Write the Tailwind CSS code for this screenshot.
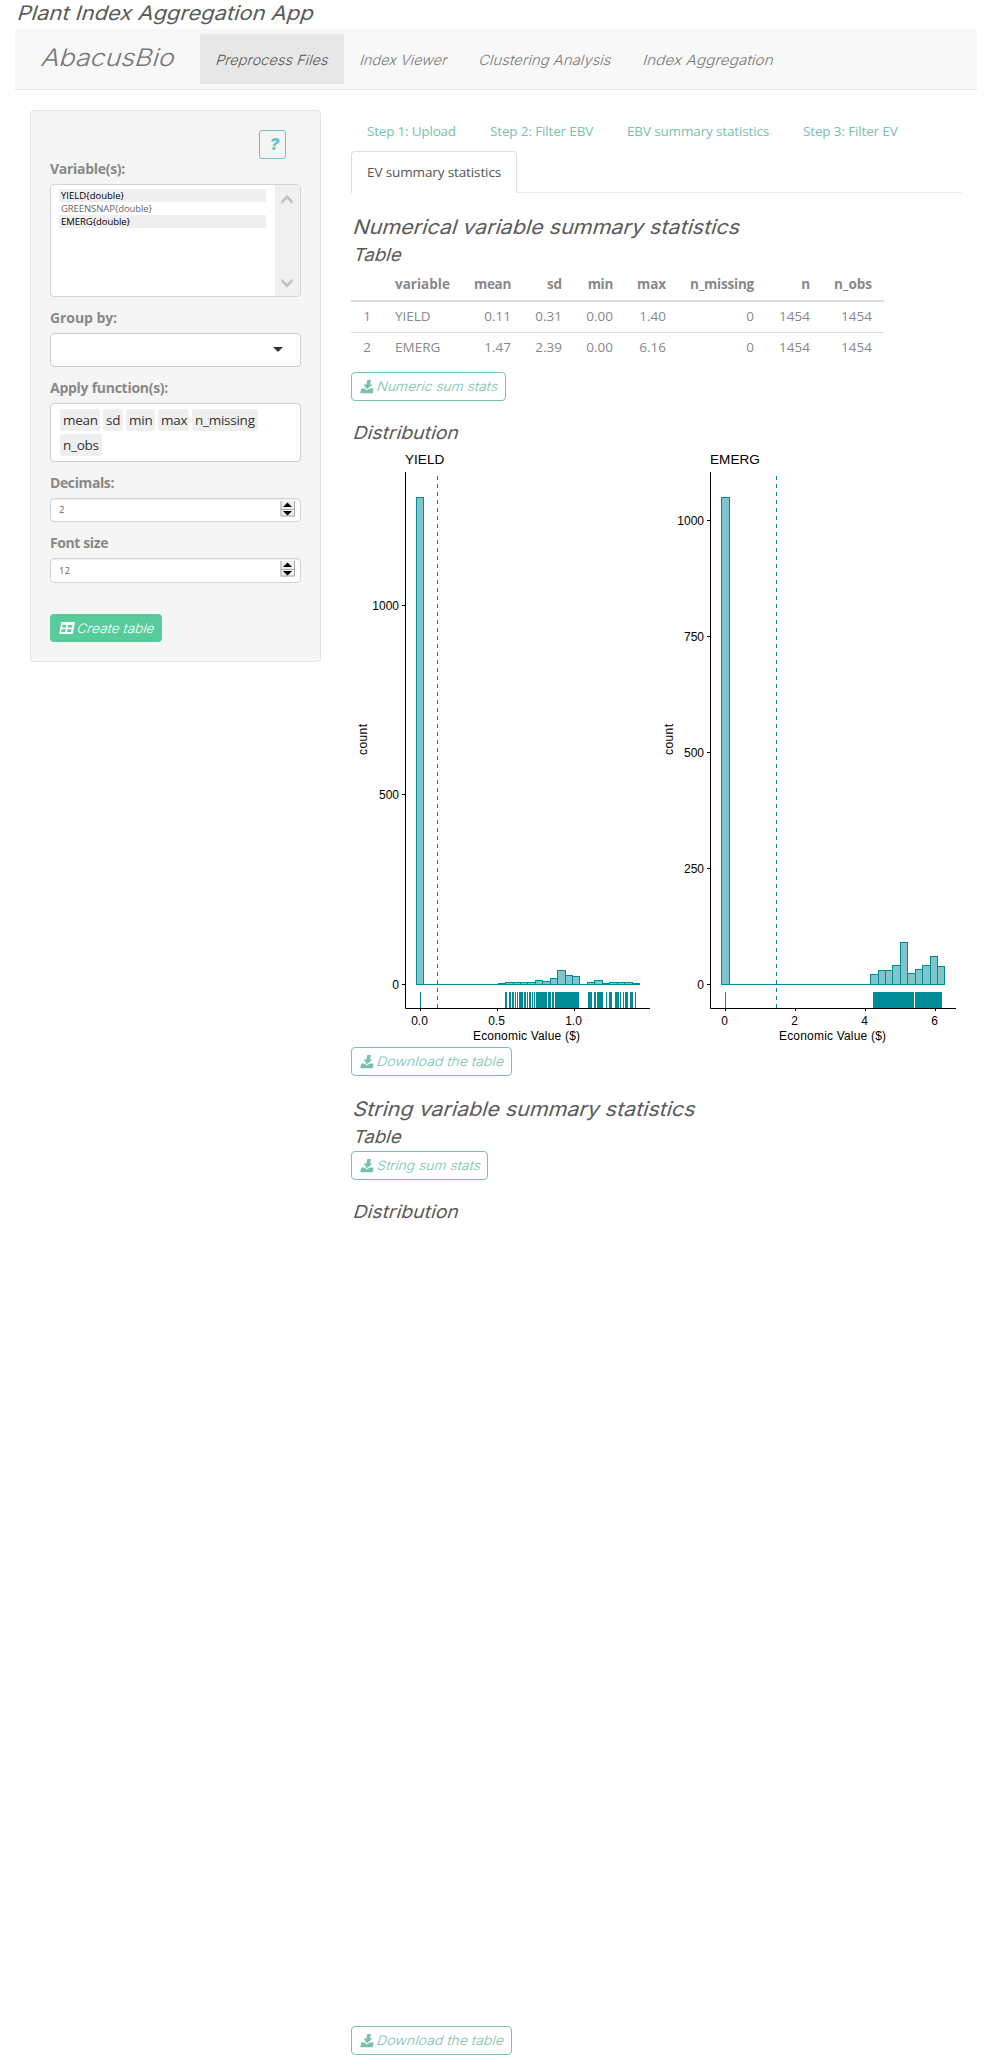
<!DOCTYPE html>
<html lang="en">
<head>
<meta charset="utf-8">
<title>Plant Index Aggregation App</title>
<script src="https://cdn.jsdelivr.net/npm/@tailwindcss/browser@4"></script>
</head>
<body class="bg-white font-['Open_Sans',sans-serif] text-sm text-[#888]">
<svg class="hidden">
  <symbol id="dl" viewBox="0 0 14 14"><path d="M7.400 0H11L10 4.500H12.800L6.800 9.200L3.600 4.500H6.300Z" fill="currentColor"/><path d="M1.400 8.600H4.600L6.800 10.600L9.600 8.600H13.600L12.800 13.200H0.200Z" fill="currentColor"/></symbol>
</svg>
<div class="h-[2055px] px-[15px]">
  <h2 class="h-[29px] pl-[1px] font-['Inter',sans-serif] text-[20px] leading-[27px] text-[#5a5a5a]"><span class="inline-block origin-[0_78%] [transform:skewX(-17deg)_scaleX(1.097)]">Plant Index Aggregation App</span></h2>
  <nav class="flex h-[61px] border-b border-[#e7e7e7] bg-[#f8f8f8] pt-[5px] font-['Inter',sans-serif] font-light text-[#777]">
    <div class="w-[185px] pl-[25px] text-[24px] leading-[47px]"><span class="inline-block origin-[0_68%] [transform:skewX(-17deg)_scaleX(1.115)]">AbacusBio</span></div>
    <div class="h-[50px] w-[144px] bg-[#e7e7e7] pl-[15px] leading-[51px] text-[#555]"><span class="inline-block origin-[0_60%] [transform:skewX(-17deg)_scaleX(1.045)]">Preprocess Files</span></div>
    <div class="w-[119px] pl-[15px] leading-[51px]"><span class="inline-block origin-[0_60%] [transform:skewX(-17deg)_scaleX(1.035)]">Index Viewer</span></div>
    <div class="w-[164px] pl-[15px] leading-[51px]"><span class="inline-block origin-[0_60%] [transform:skewX(-17deg)_scaleX(1.065)]">Clustering Analysis</span></div>
    <div class="pl-[15px] leading-[51px]"><span class="inline-block origin-[0_60%] [transform:skewX(-17deg)_scaleX(1.1)]">Index Aggregation</span></div>
  </nav>
  <div class="flex gap-[30px] pl-[15px] pt-5">
    <aside class="h-[552px] w-[291px] shrink-0 rounded border border-[#e3e3e3] bg-[#f5f5f5] px-[19px] pt-[19px]">
      <button class="ml-[209px] block h-[29px] w-[27px] rounded-[3px] border border-[#6cc3d5] pl-1 text-center font-['Inter',sans-serif] text-[16px] leading-[27px] font-black italic text-[#6cc3d5]">?</button>
      <div class="h-[25px] leading-5 font-bold tracking-[-0.29px]">Variable(s):</div>
      <div class="flex h-[113px] w-[251px] justify-between overflow-hidden rounded border border-[#ced4da] bg-white">
        <div class="w-[215px] pl-2 pt-1 text-[9.5px] leading-[13px] text-[#666]">
          <div class="h-[13px] bg-[#efefef] pl-[2px] text-black">YIELD{double}</div>
          <div class="h-[13px] pl-[2px] tracking-[-0.09px]">GREENSNAP{double}</div>
          <div class="h-[13px] bg-[#efefef] pl-[2px] tracking-[-0.07px] text-black">EMERG{double}</div>
        </div>
        <svg class="h-[111px] w-[25px] bg-[#f0f0f0]" viewBox="0 0 25 111" fill="#bfbfbf"><path d="M6.500 15.500L12 10L17.500 15.500V19L12 13.800L6.500 19Z"/><path d="M6.500 93.500L12 98.800L17.500 93.500V97L12 102.500L6.500 97Z"/></svg>
      </div>
      <div class="mt-[10px] h-[26px] leading-[22px] font-bold tracking-[-0.08px]">Group by:</div>
      <div class="flex h-[34px] w-[251px] items-center justify-end rounded border border-[#ccc] bg-white pr-[17px]"><svg class="mt-[-2px] h-[5px] w-[10px]" viewBox="0 0 10 5"><path d="M0 0H10L5 5Z" fill="#333"/></svg></div>
      <div class="mt-[10px] h-[26px] leading-[22px] font-bold tracking-[-0.27px]">Apply function(s):</div>
      <div class="flex h-[59px] w-[251px] flex-wrap content-start gap-[3px] rounded border border-[#ccc] bg-white pl-[9px] pt-[5px] text-[13.5px] leading-[22px] tracking-[-0.25px] text-[#333]">
        <div class="h-[22px] w-[40px] rounded-[3px] bg-[#efefef] pl-[3px]">mean</div>
        <div class="h-[22px] w-[20px] rounded-[3px] bg-[#efefef] pl-[3px]">sd</div>
        <div class="h-[22px] w-[29px] rounded-[3px] bg-[#efefef] pl-[3px]">min</div>
        <div class="h-[22px] w-[31px] rounded-[3px] bg-[#efefef] pl-[3px]">max</div>
        <div class="h-[22px] w-[66px] rounded-[3px] bg-[#efefef] pl-[3px]">n_missing</div>
        <div class="h-[22px] w-[42px] rounded-[3px] bg-[#efefef] pl-[3px]">n_obs</div>
      </div>
      <div class="mt-[10px] h-[26px] leading-[22px] font-bold tracking-[-0.39px]">Decimals:</div>
      <div class="flex h-6 w-[251px] justify-between rounded border border-[#ced4da] bg-white pl-2 pr-[5px] text-[9.5px] leading-[22px] text-[#666] shadow-[inset_0_1px_1px_rgba(0,0,0,.075)]"><span>2</span>
        <svg class="mt-[2px] h-4 w-[15px]" viewBox="0 0 15 16"><path d="M0 0H15V16H0Z" fill="#efefef"/><path d="M1 0V15H14.500V0M1 8.500H14" fill="none" stroke="#aaa"/><path d="M3 6L7.500 1.500L12 6ZM3 10L7.500 14.500L12 10Z" fill="#000"/></svg></div>
      <div class="mt-[10px] h-[26px] leading-[21px] font-bold tracking-[-0.4px]">Font size</div>
      <div class="flex h-[25px] w-[251px] justify-between rounded border border-[#ced4da] bg-white pl-2 pr-[5px] text-[9.5px] leading-[23px] text-[#666] shadow-[inset_0_1px_1px_rgba(0,0,0,.075)]"><span>12</span>
        <svg class="mt-[2px] h-4 w-[15px]" viewBox="0 0 15 16"><path d="M0 0H15V16H0Z" fill="#efefef"/><path d="M1 0V15H14.500V0M1 8.500H14" fill="none" stroke="#aaa"/><path d="M3 6L7.500 1.500L12 6ZM3 10L7.500 14.500L12 10Z" fill="#000"/></svg></div>
      <button class="mt-[31px] flex h-7 w-[112px] items-center rounded bg-[#56cc9d] pl-[9px] font-['Inter',sans-serif] text-[13px] leading-[27px] font-light text-white"><svg class="mr-px h-3 w-[16px]" viewBox="0 0 16 12"><path fill-rule="evenodd" d="M3.300 0H15Q16 0 15.800 1L14 11Q13.800 12 12.800 12H1Q0 12 .2 11L2.200 1Q2.400 0 3.300 0ZM3.500 3L3 5.600H7L7.500 3ZM9.300 3L8.800 5.600H12.900L13.400 3ZM2.700 7.300L2.200 10H6.200L6.700 7.300ZM8.500 7.300L8 10H12.100L12.600 7.300Z" fill="#fff"/></svg><span class="inline-block origin-[0_68%] [transform:skewX(-17deg)_scaleX(1.055)]">Create table</span></button>
    </aside>
    <main class="flex w-[611px] flex-col">
      <div class="flex h-[41px] pl-4 text-[13.5px] leading-[41px] tracking-[-0.15px] text-[#78c2ad]">
        <div class="w-[123px] pt-px tracking-[-0.2px]">Step 1: Upload</div>
        <div class="w-[137px] pt-px">Step 2: Filter EBV</div>
        <div class="w-[176px] pt-px">EBV summary statistics</div>
        <div class="pt-px">Step 3: Filter EV</div>
      </div>
      <div class="flex h-[42px]">
        <div class="w-[166px] rounded-t border border-b-0 border-[#ddd] pl-[15px] text-[13.5px] leading-[40px] tracking-[-0.12px] text-[#555]">EV summary statistics</div>
        <div class="grow border-b border-[#ececec]"></div>
      </div>
      <h3 class="mt-[22px] h-[29px] pl-px font-['Inter',sans-serif] text-[20px] leading-6 text-[#5a5a5a]"><span class="inline-block origin-[0_80%] [transform:skewX(-17deg)_scaleX(1.074)]">Numerical variable summary statistics</span></h3>
      <h4 class="h-[22px] pl-px font-['Inter',sans-serif] text-[18px] leading-[22px] text-[#5a5a5a]"><span class="inline-block origin-[0_80%] [transform:skewX(-17deg)_scaleX(1.04)]">Table</span></h4>
      <table class="mt-[3px] w-[533px] table-fixed border-collapse text-right text-[13.5px] leading-[29px]">
        <colgroup><col class="w-[32px]"><col class="w-[79px]"><col class="w-[61px]"><col class="w-[51px]"><col class="w-[51px]"><col class="w-[53px]"><col class="w-[88px]"><col class="w-[56px]"><col class="w-[62px]"></colgroup>
        <tbody>
        <tr class="h-8 border-b-2 border-[#ddd] font-bold"><td></td><td class="p-0 pl-3 text-left">variable</td><td class="p-0 pr-3 tracking-[-0.3px]">mean</td><td class="p-0 pr-3 tracking-[-0.1px]">sd</td><td class="p-0 pr-3 tracking-[-0.3px]">min</td><td class="p-0 pr-3 tracking-[-0.1px]">max</td><td class="p-0 pr-3 tracking-[-0.2px]">n_missing</td><td class="p-0 pr-3">n</td><td class="p-0 pr-3">n_obs</td></tr>
        <tr class="h-[31px] border-b border-[#ddd]"><td class="p-0 pr-3">1</td><td class="p-0 pl-3 text-left">YIELD</td><td class="p-0 pr-3">0.11</td><td class="p-0 pr-3">0.31</td><td class="p-0 pr-3">0.00</td><td class="p-0 pr-3">1.40</td><td class="p-0 pr-3">0</td><td class="p-0 pr-3">1454</td><td class="p-0 pr-3">1454</td></tr>
        <tr class="h-[30px]"><td class="p-0 pr-3">2</td><td class="p-0 pl-3 text-left">EMERG</td><td class="p-0 pr-3">1.47</td><td class="p-0 pr-3">2.39</td><td class="p-0 pr-3">0.00</td><td class="p-0 pr-3">6.16</td><td class="p-0 pr-3">0</td><td class="p-0 pr-3">1454</td><td class="p-0 pr-3">1454</td></tr>
        </tbody>
      </table>
      <button class="mt-[10px] flex h-[29px] w-[155px] items-center rounded border border-[#78c2ad] pl-2 font-['Inter',sans-serif] text-[13px] leading-[27px] font-light text-[#78c2ad]"><svg class="mr-[2px] size-[14px]"><use href="#dl"/></svg><span class="inline-block origin-[0_68%] [transform:skewX(-17deg)_scaleX(1.07)]">Numeric sum stats</span></button>
      <h4 class="mt-5 h-6 pl-px font-['Inter',sans-serif] text-[18px] leading-6 text-[#5a5a5a]"><span class="inline-block origin-[0_78%] [transform:skewX(-17deg)_scaleX(1.08)]">Distribution</span></h4>
      <svg id="plots" class="h-[602px] w-[611px] shrink-0 font-['Liberation_Sans',sans-serif]" viewBox="351 445 611 602" fill="#000" font-size="12"></svg>
      <button class="flex h-[29px] w-[161px] items-center rounded border border-[#78c2ad] pl-2 font-['Inter',sans-serif] text-[13px] leading-[27px] font-light text-[#78c2ad]"><svg class="mr-[2px] size-[14px]"><use href="#dl"/></svg><span class="inline-block origin-[0_68%] [transform:skewX(-17deg)_scaleX(1.085)]">Download the table</span></button>
      <h3 class="mt-[21px] h-[29px] pl-px font-['Inter',sans-serif] text-[20px] leading-6 text-[#5a5a5a]"><span class="inline-block origin-[0_80%] [transform:skewX(-17deg)_scaleX(1.07)]">String variable summary statistics</span></h3>
      <h4 class="h-[22px] pl-px font-['Inter',sans-serif] text-[18px] leading-[22px] text-[#5a5a5a]"><span class="inline-block origin-[0_80%] [transform:skewX(-17deg)_scaleX(1.04)]">Table</span></h4>
      <button class="mt-[3px] flex h-[29px] w-[137px] items-center rounded border border-[#78c2ad] pl-2 font-['Inter',sans-serif] text-[13px] leading-[27px] font-light text-[#78c2ad]"><svg class="mr-[2px] size-[14px]"><use href="#dl"/></svg><span class="inline-block origin-[0_68%] [transform:skewX(-17deg)_scaleX(1.07)]">String sum stats</span></button>
      <h4 class="mt-5 h-[826px] pl-px font-['Inter',sans-serif] text-[18px] leading-6 text-[#5a5a5a]"><span class="inline-block origin-[0_78%] [transform:skewX(-17deg)_scaleX(1.08)]">Distribution</span></h4>
      <button class="flex h-[29px] w-[161px] items-center rounded border border-[#78c2ad] pl-2 font-['Inter',sans-serif] text-[13px] leading-[27px] font-light text-[#78c2ad]"><svg class="mr-[2px] size-[14px]"><use href="#dl"/></svg><span class="inline-block origin-[0_68%] [transform:skewX(-17deg)_scaleX(1.085)]">Download the table</span></button>
    </main>
  </div>
</div>
<script>
// Histograms with rug marks; positions are in page pixels
const BASE = 984.5, AXIS = 1008.5, INK = '#008b98', FILL = '#80c5cc';
const charts = [
  { title: 'YIELD', x0: 405.5, x1: 650, mean: 437.5, first: [416.5, 423.5], cx: 526.5, cy: 367,
    y: [[605.5, '1000'], [794.5, '500'], [984.5, '0']], x: [[420.5, '0.0'], [497.5, '0.5'], [574.5, '1.0']],
    edges: [498.5, 505.5, 513.5, 520.5, 527.5, 535.5, 542.5, 550.5, 557.5, 565.5, 572.5, 579.5, 587.5, 594.5, 602.5, 609.5, 617.5, 624.5, 632.5, 639.5],
    tops: [983.5, 982.5, 982.5, 982.5, 982.5, 980.5, 981.5, 978.5, 970.5, 975.5, 976.5, 984.5, 982.5, 980.5, 983.5, 982.5, 982.5, 982.5, 983.5],
    rug: [[420, 421], [505, 507], [509, 511], [512, 514], [515, 516], [517, 518], [519, 523], [524, 526], [527, 528], [529, 531], [532, 533], [534, 535], [536, 547], [548, 551], [552, 554], [555, 579], [588, 592], [594, 596], [597, 603], [606, 607], [609, 612], [615, 619], [620, 621], [623, 624], [625, 628], [630, 633], [635, 636]] },
  { title: 'EMERG', x0: 710.5, x1: 956, mean: 776.5, first: [721.5, 729.5], cx: 832.5, cy: 673,
    y: [[520.5, '1000'], [636.5, '750'], [752.5, '500'], [868.5, '250'], [984.5, '0']], x: [[725.5, '0'], [795.5, '2'], [865.5, '4'], [935.5, '6']],
    edges: [870.5, 878.5, 885.5, 892.5, 900.5, 907.5, 915.5, 922.5, 930.5, 937.5, 944.5],
    tops: [974.5, 970.5, 970.5, 965.5, 942.5, 973.5, 969.5, 965.5, 956.5, 966.5],
    rug: [[725, 726], [873, 914], [915, 942]] }
];
let s = '';
const bar = (a, b, t) => `<rect x="${a}" y="${t}" width="${b - a}" height="${BASE - t}" fill="${FILL}" stroke="${INK}"/>`;
for (const c of charts) {
  s += `<text x="${c.x0 - 0.5}" y="464" font-size="13.6">${c.title}</text>`;
  s += `<path d="M${c.first[0]} ${BASE}H${c.edges.at(-1)}" stroke="${INK}"/>` + bar(c.first[0], c.first[1], 497.5);
  c.tops.forEach((t, i) => { if (t < BASE) s += bar(c.edges[i], c.edges[i + 1], t); });
  for (const [a, b] of c.rug) s += `<rect x="${a}" y="992" width="${b - a}" height="16" fill="${INK}"/>`;
  s += `<path d="M${c.mean} 476V1008" stroke="${INK}" stroke-dasharray="4 4"/>`;
  s += `<path d="M${c.x0} 472V${AXIS}H${c.x1}" fill="none" stroke="#000"/>`;
  for (const [y, l] of c.y) s += `<path d="M${c.x0 - 3.5} ${y}h3" stroke="#000"/><text x="${c.x0 - 6.5}" y="${y + 4.5}" text-anchor="end">${l}</text>`;
  for (const [x, l] of c.x) s += `<path d="M${x} 1008v3" stroke="#000"/><text x="${x - 1}" y="1025" text-anchor="middle">${l}</text>`;
  s += `<text x="${c.cx}" y="1040" text-anchor="middle" textLength="107">Economic Value ($)</text>`;
  s += `<text transform="translate(${c.cy} 739.5) rotate(-90)" text-anchor="middle" textLength="31">count</text>`;
}
document.getElementById('plots').innerHTML = s;
</script>
</body>
</html>
